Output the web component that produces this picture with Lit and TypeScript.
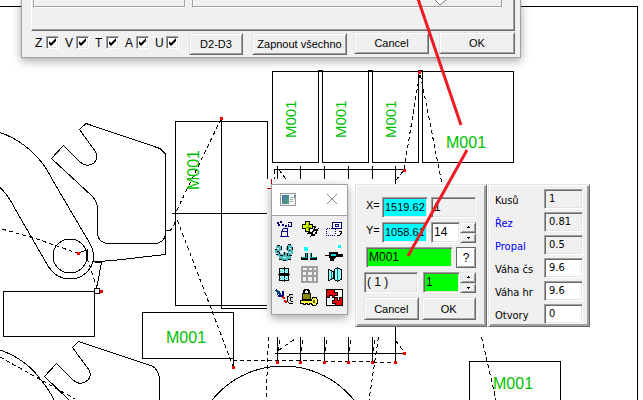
import { LitElement, html, svg, css } from "lit";
import { customElement } from "lit/decorators.js";

const tickXs = [277, 300, 324, 348, 372, 395];
const redDots: [number, number][] = [
  [221, 118], [78, 253], [101, 291], [233, 367], [404, 353], [404, 170], [419, 72],
  ...tickXs.map((x): [number, number] => [x, 362]),
];

@customElement("part-drawing")
class PartDrawing extends LitElement {
  static styles = css`
    :host { display: block; height: 100%; }
    svg { display: block; width: 100%; height: 100%; }
    .line { fill: none; stroke: #000; stroke-width: 1; shape-rendering: crispEdges; }
    .dash { fill: none; stroke: #000; stroke-dasharray: 4 3; shape-rendering: crispEdges; }
    .dot { fill: #f00; shape-rendering: crispEdges; }
    .cut { fill: none; stroke: #b00; shape-rendering: crispEdges; }
    .name { font: 16px "Liberation Sans", Arial, sans-serif; fill: #00c000; }
    .narrow { font-size: 15px; }
  `;
  render() {
    return html`<svg role="img" aria-label="Nesting plan">
      <g class="line">
        <path d="M0 6.5H637.5V2000" />
        <rect x="272.5" y="71.5" width="46" height="91" />
        <rect x="322.5" y="71.5" width="46" height="91" />
        <rect x="372.5" y="71.5" width="46" height="91" />
        <rect x="422.5" y="71.5" width="91" height="91" />
        <path d="M318 70.5H323M368 70.5H373M418 70.5H423M318 71.5H323M368 71.5H373M418 71.5H423" />
        <path d="M267.5 179V121.5H175.5V305.5H267M221.5 118V308.5H267M172 213.5H267" />
        <rect x="142.5" y="312.5" width="91" height="46" />
        <path d="M233.5 358V366" />
        <rect x="3.5" y="291.5" width="91" height="45" />
        <path d="M469.5 2000V361.5H560.5V2000" />
        <path d="M0 132.5Q25 141 43 164Q48 171 52 179L89 242Q94 250 93.500 259A23.500 23.500 0 0 1 70 279Q56 279 48 266L14 207Q8 195 0 187.500" />
        <circle cx="70" cy="256" r="17" />
        <path d="M86 123.500L79.500 129.500L95 151Q99 158 94 163Q87 168 80 162L63.500 145.500L51.500 158.500L92 196Q97 201 97.500 208V234Q99 243 108 243.500H156Q164 242 165.500 235V154L160 148.500Z" />
        <path d="M165.500 234V254.500L117 260L93 262M93 260L96 262.500H101.500L96.500 289M165.500 230.500H171" />
        <circle cx="97" cy="291" r="3" />
        <path d="M0 350Q26 359 41 380Q48 388 54 400" />
        <path d="M69 400L44.500 376.500L56.500 363.500L72 379Q80 387 88 380Q92 376 89 370L72.500 347.500L78.500 341.500L152 366Q158 369 159.500 378V400" />
        <circle cx="283" cy="457" r="91" />
        <path d="M274 169.500H404M275 353.500H404M395.500 166V353" />
        ${tickXs.map((x) => svg`<path d="M${x + 0.5} 166V179M${x + 0.5} 337V361" />`)}
        <path d="M77 253.500L87 250V258" />
      </g>
      <g class="dash">
        <path d="M221 119L175 214L233 366" />
        <path d="M175.500 215Q175 228 170 230" />
        <path d="M2 229L37 239L77 253M87 258L97 288" />
        <path d="M0 357L75 399" />
        <path d="M419.500 75L404 169M420.500 75L442 184" />
        <path d="M233 360.500H300L395 362.500" />
        <path d="M268.500 337L266 400M378.500 337L369 400" />
        <path d="M279 350L295 339M396 341L404 352" />
        <path d="M274.500 170V179M279 170L286 179M396 180L404 170" />
        <path d="M481.500 337L496 400" />
        ${tickXs.slice(0, 5).map((x) => svg`<path d="M${x + 3} 340L${x + 1} 352" />`)}
      </g>
      <path class="cut" d="M271.500 179V188.500H267" />
      <g>${redDots.map(([x, y]) => svg`<rect class="dot" x=${x - 1} y=${y - 1} width="3" height="3" />`)}</g>
      <g>
        <text class="name" x="166" y="343">M001</text>
        <text class="name" x="446" y="148">M001</text>
        <text class="name" x="493" y="389">M001</text>
        <text class="name" transform="translate(199 190) rotate(-90)">M001</text>
        <text class="name narrow" transform="translate(296 138) rotate(-90)">M001</text>
        <text class="name narrow" transform="translate(346 138) rotate(-90)">M001</text>
        <text class="name narrow" transform="translate(396 138) rotate(-90)">M001</text>
      </g>
    </svg>`;
  }
}

const tools = [
  {
    label: "Torch",
    art: svg`<path d="M2 4H4M5 3H7M3 6H5M7 6H9M10 7H12" stroke="#000080" stroke-width="2"/>
      <path d="M8.500 9.500H12.500V17.500H6.500V12.500L8.500 9.500M7 12.500H13M13.500 8V5M13 3.500H16.500V7.500H13.500" fill="none" stroke="#000080"/>
      <path d="M5 17.500H14" stroke="#000080"/>`,
  },
  {
    label: "Add copies",
    art: svg`<path d="M13 7.500H15.500L13.500 11.500L17.500 10.500L15.500 15.500L11.500 16.500L12.500 13.500L8 14.500L9.500 11.500" fill="#fff" stroke="#000" stroke-width="1.500"/>
      <path d="M5.500 2.500H9.500V5.500H12.500V9.500H9.500V12.500H5.500V9.500H2.500V5.500H5.500Z" fill="#cf0" stroke="#000"/>
      <path d="M6 8H11M8 4V11" stroke="#7a9a00"/>`,
  },
  {
    label: "Move part",
    art: svg`<rect x="7.500" y="3.500" width="9" height="6" fill="#fff" stroke="#000080"/>
      <rect x="10.500" y="5.500" width="3" height="2" fill="none" stroke="#000080"/>
      <path d="M1.500 9.500H10M1.500 9.500V16.500M1 16.500H11M10.500 10V16" fill="none" stroke="#000080" stroke-dasharray="1 1"/>
      <path d="M12 16.500H14.500L16.500 13.500M14 12.500H17M16.500 13V15" fill="none" stroke="#000"/>`,
  },
  {
    label: "Gears",
    art: svg`<path d="M1 4H6V8L4 10L6 12V14H2V11H0V7H1ZM12 3H17V6H18V12H16V14H13V10L11 8ZM5 12H8L9 10H11L12 12H14V14H16V17H13V19H7V17H4V14H5Z" fill="#48b8c0"/>
      <path d="M2 3.500H5M6.500 4V8M4.500 10V12M1 12.500H3M0 7.500H2M12.500 4V8M13 2.500H16M17.500 5V8M17 13.500H14M5 13.500H8M9.500 10V13M12 13.500V11M4 17.500H7M13 17.500H16M8 18.500H11" stroke="#000" fill="none"/>
      <path d="M2 6H4M14 6H16M8 15H11M14 10H16" stroke="#dff"/><path d="M2 9H4M14 8H15" stroke="#000"/>`,
  },
  {
    label: "Pierce corner",
    art: svg`<path d="M1 1L11 11M10 1L1 11M5.500 0V12M0 6.500H12" stroke="#fff"/><rect x="4" y="5" width="4" height="4" fill="#0ff"/>
      <path d="M1 15H5V11H8V18H1ZM10 11H12V15H17V18H10Z" fill="#000"/><path d="M2 15.500H6.500V11M10.500 11V15.500H16" fill="none" stroke="#0bb"/>`,
  },
  {
    label: "Lead-in",
    art: svg`<path d="M12 1L18 7M18 1L11 8M14.500 0V8M11 4.500H19" stroke="#fff"/><rect x="13" y="3" width="3" height="3" fill="#0ff"/>
      <path d="M0 13H4M4 10H12V12H17V14H12L10 16H8V19H5V15H4Z" fill="#000" stroke="#000"/>
      <path d="M6 12.500H11" stroke="#0dd" stroke-width="2"/>`,
  },
  {
    label: "Mirror vertically",
    art: svg`<path d="M4.500 3.500H13.500V8.500H4.500ZM4.500 10.500H13.500V15.500H4.500Z" fill="#9ff" stroke="#000"/>
      <path d="M3 9.500H15M9.500 2V17" stroke="#000"/><path d="M5 6.500H13M5 13.500H13" stroke="#5bb" stroke-dasharray="1 1"/>`,
  },
  {
    label: "Grid",
    art: svg`<rect x="1" y="1" width="17" height="17" fill="#a0a0a0"/>
      <path d="M3 3H7V5H3ZM9 3H12V5H9ZM14 3H16V5H14ZM3 7H6V10H3ZM8 7H12V10H8ZM14 7H16V10H14ZM3 12H6V16H3ZM8 12H12V16H8ZM14 12H16V16H14Z" fill="#f0f0f0"/>`,
  },
  {
    label: "Mirror horizontally",
    art: svg`<path d="M3.500 4.500L8.500 6.500V13.500L3.500 15.500ZM9.500 4.500L12.500 2.500L16.500 5V14L12.500 16.500L9.500 14.500Z" fill="#9ff" stroke="#000"/>
      <path d="M6.500 6V14M12.500 3V16" stroke="#088"/>`,
  },
  {
    label: "Insert part",
    art: svg`<path d="M1 2L6 7M2 6L5 4" stroke="#004080" stroke-width="2" fill="none"/><path d="M3 8H8V3" fill="none" stroke="#000080" stroke-width="1.500"/>
      <path d="M8 9L10 11M9 13L12 14" stroke="#f00" stroke-width="2"/><path d="M18 6H14V8L12 9V13L14 15H18M18 9H16L15 11L16 13H18" fill="#ddd" stroke="#000"/>`,
  },
  {
    label: "Lock",
    art: svg`<path d="M4 6V3L5.500 1.500H7.500L9 3V6" fill="none" stroke="#000" stroke-width="1.500"/><rect x="2.500" y="5.500" width="8" height="6" fill="#880" stroke="#000"/>
      <path d="M.5 12.500H11L13 9.500H16L17.500 12V15L15.500 17.500H13L11 15.500H9V16.500H7V15.500H5V16.500H3V15.500H.5Z" fill="#ff5" stroke="#000"/><rect x="13" y="12" width="2" height="3" fill="#660"/>`,
  },
  {
    label: "Automatic nesting",
    art: svg`<rect x="1.500" y="1.500" width="16" height="16" fill="#fff" stroke="#000"/>
      <path d="M2 2H9V4H12V7H9V9H7V7H4V9H2ZM10 10H12V13H14V10H17V17H10V15H7V12H10Z" fill="#e00"/>
      <path d="M9.500 2V4.500H12.500V7.500H9.500V12.500H7.500V15.500H10.500V17M2 9.500H4.500V7.500H7.500V9.500H12.500V12.500H14.500V9.500H17" fill="none" stroke="#000"/>`,
  },
];

const axes = ["Z", "V", "T", "A", "U"];

const stats = [
  { id: "pieces", label: "Kusů", value: "1", locked: true, link: false },
  { id: "cut", label: "Řez", value: "0.81", locked: true, link: true },
  { id: "pierce", label: "Propal", value: "0.5", locked: true, link: true },
  { id: "net", label: "Váha čs", value: "9.6", locked: false, link: false },
  { id: "gross", label: "Váha hr", value: "9.6", locked: false, link: false },
  { id: "holes", label: "Otvory", value: "0", locked: false, link: false },
];

@customElement("app-root")
class AppRoot extends LitElement {
  static styles = css`
    :host {
      display: block; position: relative; height: 100vh; overflow: hidden;
      background: #fff; color: #000;
      font: 11px/14px "Liberation Sans", Arial, sans-serif;
    }
    * { box-sizing: border-box; }
    button, input { font: inherit; color: inherit; margin: 0; border-radius: 0; }
    button {
      background: #f0f0f0; padding: 0; text-align: center;
      border: 1px solid; border-color: #e3e3e3 #696969 #696969 #e3e3e3;
      box-shadow: inset 1px 1px #fff, inset -1px -1px #a0a0a0;
    }
    input[type="text"] {
      width: 100%; min-width: 0; height: 21px; padding: 0 2px 2px; outline: 0;
      background: #fff; border: 1px solid; border-color: #a0a0a0 #fff #fff #a0a0a0;
      box-shadow: inset 1px 1px #696969, inset -1px -1px #e3e3e3;
    }
    input[type="text"].locked { background: #f0f0f0; }
    input[type="text"].cyan { background: #0ff; }
    input[type="text"].green { background: #0f0; }

    .window { position: absolute; background: #f0f0f0; }
    .settings {
      left: 21px; top: 0; width: 500px; padding: 0 5px 1px 9px;
      border: 1px solid #a0a0a0; border-top: 0; box-shadow: 0 3px 9px rgba(0, 0, 0, .35);
    }
    .sheet {
      display: flex; gap: 7px; height: 31px; padding: 0 12px 0 1px;
      border: solid; border-width: 0 1px 1px 1px; border-color: #fff #696969 #696969 #fff;
      box-shadow: inset -1px -1px #a0a0a0;
    }
    .group { height: 7px; border: 1px solid #a0a0a0; border-top: 0; box-shadow: 1px 1px #fff, inset 1px 0 #fff; }
    .group.first { flex: 0 0 152px; }
    .group.second { flex: 1; padding-left: 242px; }
    .group svg { display: block; }
    .bar { display: flex; align-items: flex-start; height: 25px; padding: 1px 0 0 4px; }
    .axes { display: flex; padding-top: 4px; width: 154px; }
    .axis { display: flex; width: 30px; gap: 1px; font-size: 12px; }
    .axis .letter { width: 10px; }
    .box { display: grid; width: 13px; height: 13px; }
    .box > * { grid-area: 1 / 1; }
    .box input {
      appearance: none; width: 13px; height: 13px; background: #fff; border: 1px solid;
      border-color: #a0a0a0 #fff #fff #a0a0a0; box-shadow: inset 1px 1px #696969, inset -1px -1px #e3e3e3;
    }
    .box svg { pointer-events: none; visibility: hidden; }
    .box input:checked + svg { visibility: visible; }
    .bar button { height: 22px; }
    .bar .lower { margin-top: 1px; }
    .toggle { width: 54px; margin-right: 9px; }
    .all { width: 95px; margin-right: 7px; }
    .cancel { width: 75px; margin-right: 10px; }
    .accept { flex: 1; }

    .palette {
      left: 271px; top: 184px; width: 77px; padding-bottom: 5px;
      border: 1px solid #a0a0a0; box-shadow: 0 3px 9px rgba(0, 0, 0, .35);
    }
    .title {
      display: flex; align-items: center; justify-content: space-between; height: 31px;
      padding: 0 9px 2px 8px; background: #fff; border-bottom: 1px solid #a0a0a0;
    }
    .title button { border: 0; background: none; box-shadow: none; height: 12px; width: 12px; }
    .title svg, .tools svg { display: block; }
    .tools { display: grid; grid-template-columns: repeat(3, 1fr); padding-top: 1px; }
    .tools button { height: 23px; display: grid; place-items: center; border: 0; box-shadow: none; }
    .tools svg { shape-rendering: crispEdges; }

    .raised {
      border: 1px solid; border-color: #e3e3e3 #696969 #696969 #e3e3e3;
      box-shadow: inset 1px 1px #fff, inset -1px -1px #a0a0a0, inset -2px -2px #a0a0a0;
    }
    .position {
      left: 355px; top: 184px; width: 132px; padding: 12px 10px 6px 8px;
      display: flex; flex-direction: column; gap: 4px; font-size: 12px;
    }
    .row { display: flex; gap: 3px; }
    .row label { width: 13px; margin-left: 2px; padding-top: 1px; font-size: 11px; white-space: nowrap; }
    .row .coord { width: 46px; flex: none; font-size: 11px; }
    .spin { display: flex; flex: 1; min-width: 0; background: #fff; }
    .spin .arrows { display: grid; width: 16px; flex: none; grid-template-rows: 1fr 1fr; background: #f0f0f0; }
    .arrows button { display: grid; place-items: center; }
    .partname { padding-left: 2px; }
    .partname button { flex: 0 0 20px; background: #fdfdfd; border-color: #696969; }
    .copies { gap: 5px; }
    .copies .index { width: 54px; flex: none; }
    .actions button { height: 23px; flex: 1; font-size: 11px; }

    .stats {
      left: 488px; top: 184px; width: 102px; padding: 4px 6px 2px;
      display: grid; grid-template-columns: 1fr 39px; row-gap: 3px; align-items: center;
      font-family: "DejaVu Sans Condensed", "DejaVu Sans", sans-serif;
    }
    .stats input[type="text"] { height: 20px; padding-left: 4px; }
    .stats label { padding-top: 3px; white-space: nowrap; }
    .stats .link { color: #00f; }

    .marks { position: absolute; inset: 0; width: 100%; height: 100%; pointer-events: none; }
  `;

  private arrows(name: string) {
    return html`<span class="arrows">
      <button aria-label="${name} up"><svg width="3" height="2"><path d="M1 0H2V1H3V2H0V1H1Z" /></svg></button>
      <button aria-label="${name} down"><svg width="3" height="2"><path d="M0 0H3V1H2V2H1V1H0Z" /></svg></button>
    </span>`;
  }

  render() {
    return html`
      <part-drawing></part-drawing>

      <section class="window settings" aria-label="Settings">
        <div class="sheet">
          <div class="group first"></div>
          <div class="group second">
            <svg width="12" height="6"><path d="M0 0L5 5L11 0" fill="#fff" stroke="#777" /></svg>
          </div>
        </div>
        <div class="bar">
          <div class="axes">
            ${axes.map((axis) => html`<label class="axis">
              <span class="letter">${axis}</span>
              <span class="box"><input type="checkbox" checked />
                <svg width="13" height="13"><path d="M3 5V8L5 10L10 5V2L5 7Z" /></svg></span>
            </label>`)}
          </div>
          <button class="toggle lower">D2-D3</button>
          <button class="all lower">Zapnout všechno</button>
          <button class="cancel">Cancel</button>
          <button class="accept">OK</button>
        </div>
      </section>

      <section class="window palette" aria-label="Tools">
        <header class="title">
          <svg width="16" height="13">
            <defs><linearGradient id="pic" x2="1" y2="1"><stop stop-color="#4677b8" /><stop offset="1" stop-color="#4fa070" /></linearGradient></defs>
            <rect x=".5" y=".5" width="15" height="12" fill="#f4f4f4" stroke="#999" />
            <rect x="2" y="2" width="7" height="9" fill="url(#pic)" />
            <path d="M10 4.500H13M10 6.500H13M10 8.500H13" stroke="#aaa" /><path d="M14.500 2V5" stroke="#4677b8" />
          </svg>
          <button aria-label="Close"><svg width="12" height="12"><path d="M1 1L11 11M11 1L1 11" stroke="#888" stroke-width="1" /></svg></button>
        </header>
        <div class="tools">
          ${tools.map((t) => html`<button aria-label=${t.label}><svg width="19" height="19">${t.art}</svg></button>`)}
        </div>
      </section>

      <section class="window raised position" aria-label="Position">
        <div class="row">
          <label for="x">X=</label>
          <input id="x" class="coord cyan" type="text" value="1519.62" />
          <input class="locked" type="text" value="1" readonly aria-label="Layer" />
        </div>
        <div class="row">
          <label for="y">Y=</label>
          <input id="y" class="coord cyan" type="text" value="1058.61" />
          <span class="spin"><input type="text" value="14" aria-label="Number" />${this.arrows("Number")}</span>
        </div>
        <div class="row partname">
          <input class="green" type="text" value="M001" aria-label="Part name" />
          <button>?</button>
        </div>
        <div class="row copies">
          <input class="index locked" type="text" value="( 1 )" readonly aria-label="Index" />
          <span class="spin"><input class="green" type="text" value="1" aria-label="Copies" />${this.arrows("Copies")}</span>
        </div>
        <div class="row actions">
          <button>Cancel</button>
          <button>OK</button>
        </div>
      </section>

      <section class="window raised stats" aria-label="Part data">
        ${stats.map((s) => html`
          <label for=${s.id} class=${s.link ? "link" : ""}>${s.label}</label>
          <input id=${s.id} type="text" class=${s.locked ? "locked" : ""} .value=${s.value} ?readonly=${s.locked} />`)}
      </section>

      <svg class="marks" aria-hidden="true">
        <path d="M417 -4L461 125M467 150L408 256" fill="none" stroke="#ed1c24" stroke-width="3" />
      </svg>
    `;
  }
}
